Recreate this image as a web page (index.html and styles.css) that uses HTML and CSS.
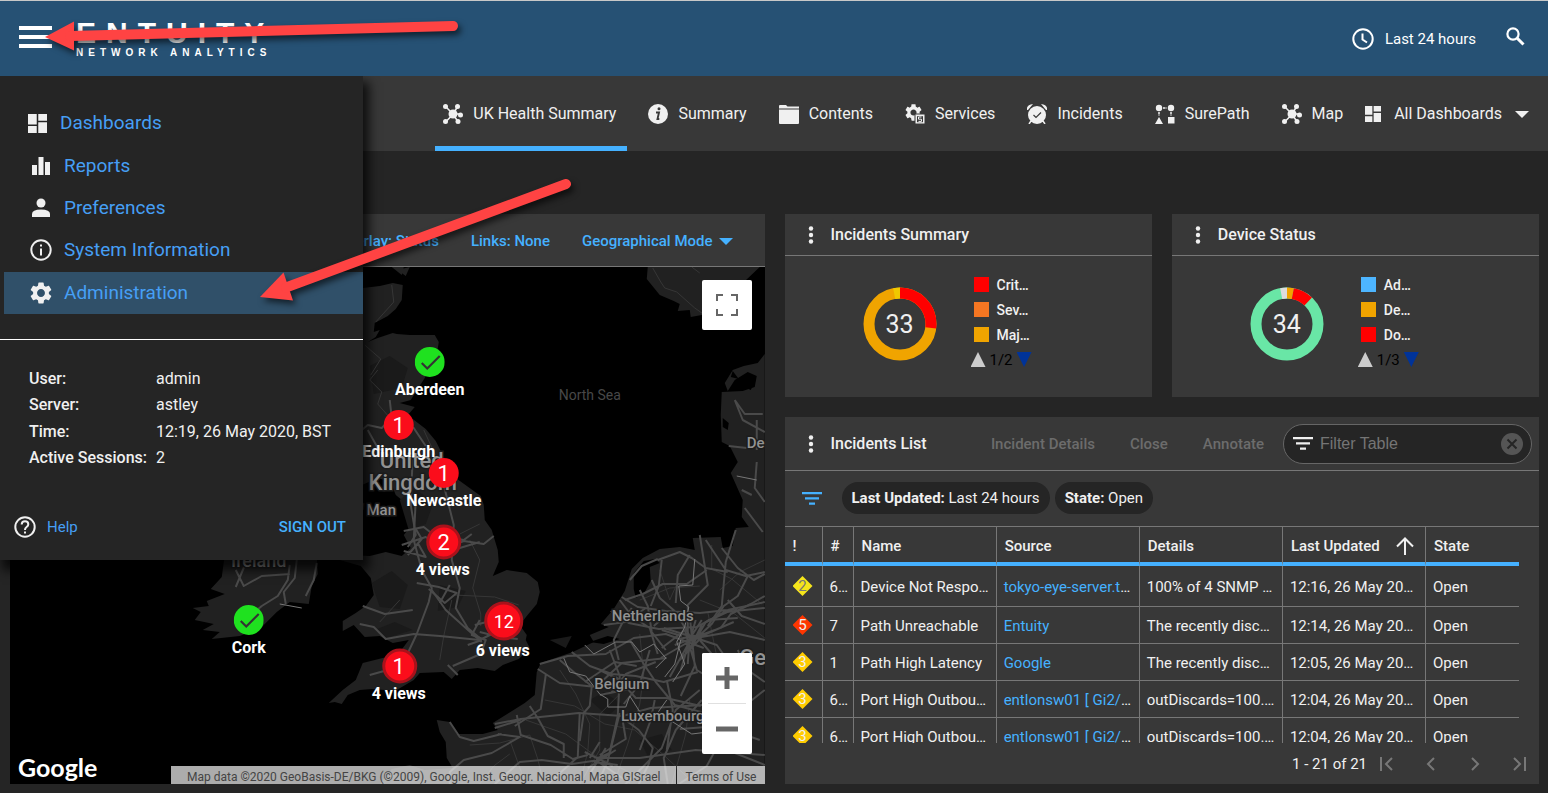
FILE: index.html
```html
<!DOCTYPE html>
<html lang="en">

<head>
  <meta charset="UTF-8" />
  <meta name="viewport" content="width=device-width, initial-scale=1.0" />
  <title>Entuity Network Analytics</title>
  <link rel="stylesheet" href="styles.css">
</head>

<body>
  <!-- shared icons -->
  <svg class="sprite" aria-hidden="true">
    <symbol id="dash" viewBox="0 0 20 20"><path d="M0 0h9.200v11H0zM10.800 0H20v7h-9.200zM0 12.700h9.200V20H0zM10.800 8.800H20V20h-9.200z" /></symbol>
    <symbol id="hub" viewBox="0 0 20 20">
      <path d="M3 3l7 7 5-8M3 17.500l7-7 5 7M10 10h8" stroke="currentColor" stroke-width="1.500" fill="none" />
      <circle cx="10" cy="10" r="4.500" /><circle cx="2.500" cy="2.500" r="2.500" /><circle cx="14.500" cy="2.500" r="2.500" />
      <circle cx="17.500" cy="11" r="2.500" /><circle cx="2.500" cy="17.500" r="2.500" /><circle cx="15" cy="17.500" r="2.500" />
    </symbol>
    <symbol id="gear" viewBox="2 2 20 20"><path d="M19.140 12.940c.04-.3.06-.61.06-.94 0-.32-.02-.64-.07-.94l2.030-1.580c.18-.14.23-.41.12-.61l-1.920-3.320c-.12-.22-.37-.29-.59-.22l-2.390.96c-.5-.38-1.030-.7-1.620-.94l-.36-2.540c-.04-.24-.24-.41-.48-.41h-3.840c-.24 0-.43.17-.47.41l-.36 2.540c-.59.24-1.130.57-1.620.94l-2.390-.96c-.22-.08-.47 0-.59.22L2.740 8.870c-.12.21-.08.47.12.61l2.030 1.580c-.05.3-.09.63-.09.94s.02.64.07.94l-2.030 1.580c-.18.14-.23.41-.12.61l1.920 3.320c.12.22.37.29.59.22l2.390-.96c.5.38 1.030.7 1.620.94l.36 2.540c.05.24.24.41.48.41h3.840c.24 0 .44-.17.47-.41l.36-2.540c.59-.24 1.130-.56 1.620-.94l2.390.96c.22.08.47 0 .59-.22l1.920-3.320c.12-.22.07-.47-.12-.61l-2.010-1.580zM12 15.600c-1.980 0-3.600-1.620-3.600-3.600s1.620-3.600 3.600-3.600 3.600 1.620 3.600 3.600-1.620 3.600-3.600 3.600z" /></symbol>
    <symbol id="filter" viewBox="0 0 20 13"><path d="M0 0h20v2.300H0zM3 5.200h14v2.300H3zM7 10.400h6v2.300H7z" /></symbol>
    <symbol id="dots" viewBox="0 0 6 18"><circle cx="3" cy="2.500" r="2.200" /><circle cx="3" cy="9" r="2.200" /><circle cx="3" cy="15.500" r="2.200" /></symbol>
    <symbol id="caret" viewBox="0 0 14 7"><path d="M0 0h14L7 7z" /></symbol>
    <symbol id="tick" viewBox="-15 -15 30 30"><circle r="15" fill="#1fe11f" /><path d="M-8 1l5.500 5.500L10-6" fill="none" stroke="#333" stroke-width="2.200" /></symbol>
  </svg>

  <header class="topbar">
    <button class="burger" aria-label="Menu"><span></span><span></span><span></span></button>
    <div class="logo">
      <span class="logo-name">ENTUITY</span>
      <span class="logo-sub">NETWORK ANALYTICS</span>
    </div>
    <button class="period">
      <svg width="22" height="22" viewBox="0 0 22 22" fill="none" stroke="currentColor" stroke-width="2"><circle cx="11" cy="11" r="9.700" /><path d="M10.500 5.500v6l4.500 3" /></svg>
      Last 24 hours
    </button>
    <button class="search" aria-label="Search">
      <svg width="19" height="19" viewBox="0 0 19 19" fill="none" stroke="currentColor"><circle cx="7" cy="7" r="5.600" stroke-width="2.200" /><path d="M11 11l6.500 6.500" stroke-width="3" /></svg>
    </button>
  </header>

  <nav class="tabs">
    <a href="#" class="tab active"><svg class="icon"><use href="#hub" /></svg>UK Health Summary</a>
    <a href="#" class="tab">
      <svg class="icon" viewBox="0 0 20 20"><circle cx="10" cy="10" r="10" /><circle cx="11" cy="4.800" r="1.500" fill="#383838" /><path d="M8 8.500h3l-1.500 6.500h1.800" fill="none" stroke="#383838" stroke-width="1.900" /></svg>Summary</a>
    <a href="#" class="tab">
      <svg class="icon" viewBox="0 0 20 20"><path d="M1 1h6l1.500 1.500H20v2H0V2q0-1 1-1zM0 5.500h20V19q0 1-1 1H1q-1 0-1-1z" /></svg>Contents</a>
    <a href="#" class="tab">
      <svg class="icon" viewBox="0 0 20 20"><use href="#gear" width="17" height="17" /><path d="M10 10h10v10H10z" stroke="#383838" /><path d="M12 12.200h6v6h-6z" fill="#383838" /><path d="M16.500 13h-3v2.200h3v2.200h-3" fill="none" stroke="currentColor" /></svg>Services</a>
    <a href="#" class="tab">
      <svg class="icon" viewBox="0 0 20 20"><circle cx="10" cy="11" r="9" /><path d="M0 6q-1-5 6-6L1 6zM20 6q1-5-6-6l5 6z" /><path d="M4 17l-2 3M16 17l2 3" stroke="currentColor" stroke-width="1.500" /><path d="M6.500 11l2.500 2.500L14 8.500" fill="none" stroke="#383838" stroke-width="1.200" /></svg>Incidents</a>
    <a href="#" class="tab">
      <svg class="icon" viewBox="0 0 20 20"><circle cx="4" cy="4" r="3.200" /><circle cx="16" cy="4" r="3.200" /><path d="M4 13l4 7H0zM13 13h6.500v6.500H13z" /><path d="M8 4h4M4 8v4M16 8v4" stroke="currentColor" stroke-width="1.500" stroke-dasharray="2.500 1" /></svg>SurePath</a>
    <a href="#" class="tab"><svg class="icon"><use href="#hub" /></svg>Map</a>
    <a href="#" class="tab tab-all"><svg class="icon-sm"><use href="#dash" /></svg>All Dashboards<svg class="caret"><use href="#caret" /></svg></a>
  </nav>

  <main class="dashboard">
    <section class="panel map-panel">
      <div class="map-head">
        <a href="#">Overlay: Status</a>
        <a href="#">Links: None</a>
        <a href="#">Geographical Mode<svg class="caret"><use href="#caret" /></svg></a>
      </div>
      <div class="map">
        <!-- geography first, then roads, borders, names and pins -->
        <svg class="map-canvas" viewBox="10 267 755 517" preserveAspectRatio="xMidYMid slice">
          <g fill="#212121">
            <path d="M340 292L363 288 380 286 393 283 403 285 402 300 396 309 388 316 375 323 374 332 380 330 376 337 368 342 378 338 393 333 397 334 410 335 435 335 439 342 437 355 432 364 425 378 416 392 411 400 400 403 415 407 409 414 394 413 392 418 413 419 426 429 436 441 443 455 456 478 481 496 484 505 485 520 492 530 498 550 499 562 493 576 507 570 527 573 538 582 540 592 537 604 527 616 520 625 527 635 526 640 530 648 519 659 503 665 495 671 478 668 460 670 452 679 444 672 420 673 414 680 397 690 385 690 372 689 360 690 348 695 342 704 335 702 329 703 343 690 356 680 363 663 383 658 398 655 409 640 393 643 380 636 365 637 354 625 343 631 343 621 356 613 366 606 374 595 371 578 361 566 340 560 350 555 370 556 386 552 402 556 411 548 404 535 413 524 412 508 396 495 391 482 378 478 360 486 340 478z" />
            <path d="M392 267h12l-2 8zM398 270l12-3-4 9z" />
            <path d="M225 555L317 555 318 574 312 586 309 604 290 602 277 612 262 627 240 636 212 639 220 632 203 630 214 624 195 620 201 612 193 608 209 606 207 601 225 594 211 589 222 577z" />
            <path d="M648 267L647 279 660 295 674 301 680 304 678 311 690 310 691 317 702 315 724 301 741 285 760 267z" />
            <path d="M765 354L758 363 744 366 733 370 725 383 728 391 735 380 748 372 757 376 755 387 743 391 722 392 721 415 722 442 730 446 738 462 731 473 743 500 742 517 749 527 736 528 733 546 723 548 721 537 693 538 695 550 680 547 660 549 643 558 632 569 625 591 614 609 601 624 609 627 590 635 594 642 573 652 541 663 537 672 535 695 525 703 493 723 498 730 483 734 457 734 450 722 437 720 440 732 446 742 447 758 453 768 425 770 410 765 392 769 380 784 765 784z" />
          </g>
          <path fill="#000" d="M634 589V573L644 561 655 559 660 563 650 567 651 581 644 594 636 598zM746 374l10 6-5 10-9-4zM723 418l6 5-1 7-5-3zM590 642l18-6 12 3-16 5zM733 371l6 8-8-2z" />
          <g fill="#1a1a1a"><path d="M370 366l20-10 18 12-6 20-28 6zM400 500l14-12 20 14-8 22-17 6zM372 583l20-12 16 14-8 24-20-2zM375 630l20-8 18 8-26 8zM440 585l26 6-8 16-20 4zM590 700l14-8 18 12-14 12zM640 740l22-6 10 16-24 6zM550 640l22-4-6 12z" /></g>

          <g class="lanes">
            <path d="M378 370l-8 10 12 12-4 12 14 16 10 14M365 345l16 14-10 16M470 540l10 20-7 28 8 26 0 12M455 595l40 2 24 8M452 600l-8 36-4 24M424 430l12 26 8 10M480 524l-20 10M400 600l-20 22" />
            <path d="M653 268l8 14 4 6 12 4 18 16 10 7M392 285l2 17-18 20M700 273l-8-6" />
            <path d="M660 570l10 30 8-18M640 600l30-12 30-2M700 600l35 14 30 24M712 545v24l20 10 30 25M720 670l-6-28-6-30M640 634l4 40-4 30-12 40-14 40M526 720l40 14 30 22 50 24M470 745l30-2 30-8 8 24 6 25M580 784l20-34 0-36 28-28M545 700l30 6 30 18 30 6 30 26 30 28M690 700l-4 34-14 50M560 670l16 24 14 30-2 28-8 32M720 590l20-18 25-12M510 740l16 44M480 784l14-18 16-12" />
          </g>
          <g class="roads">
            <path d="M392 418L382 428 368 425 350 440M392 418l-2-18M392 418l22 10 12 18M368 430l10 18 18 12M413 455l-2 50 5 30-8 12" />
            <path d="M444 485l10 40-2 35 8 28-4 20 12 20 12 10M416 500l-2 40 8 30 10 18-3 14-12 32-14 30-6 15M432 590l14 20 20 18 16 14" />
            <path d="M404 531l20-4 10 8 30 5 8-6M402 545l24-8 18 12 20-8 20 3 10-8M408 555l14-16-6-10M418 543l8 14-22-6M460 548l20-6" />
            <path d="M360 624l14 3 12 12 28-5 26 2 40 4 16-8M417 583l22 4 18 6-12 10-16-14M440 603l10-18" />
            <path d="M480 620l-8 15 14 5-5 14-28 12M480 632l20 5 18 2M475 625l20-5M448 665l10 10M482 640l-14 5M370 675l25-7M363 606l22 8 28-4" />
            <path d="M246 563l-10 24M236 570l8 16 18-10 28-2M290 565l-2 15-10 16-16 10M297 560l-2 18-11 14 2 12M317 563l-3 17-8 16M262 606l-14 12" />
            <path d="M735 400l10 14 18 0M735 400l8 20 22 12M757 420v30M729 446l18 2M757 462l-2 26 10 14M745 508l18 24M742 490l10 5" />
            <path d="M630 580l12-14 16-7M658 560l22-8 12 6 14 10 22 4M625 600l18-6 20-10 24 0 20-14M662 560l-3 26-8 20M690 555l-12 20-2 28M706 540l20 30 20 6 19-4M736 530l-10 32-4 44-14 20M722 548l16 20 16 12 11-6" />
            <path d="M622 597l16 10 28 4 34 2 28-3 37-8M611 611l18 12 30 6 38-2 28-15 40-4M604 625l22-3 20-14M620 600l12 16 18 12 8 26M632 608l-10 16-8 16 5 20M640 590l8 16 4 26 14 18M652 580l8 18 16 14 14 24-2 28" />
            <path d="M700 535l8 50-20 20 0 40-18 32M748 576l-10 20-14 10-12 18-13 12-38 22M765 640l-35-8-34 6-32-10M690 650l16-28 30-14M680 660l24-25 30-13M685 630l12 40 40 25M686 645l16-25M687 635l30 10 20 28M675 645l40-15M690 616l5 50-14 30M696 620l-15 50M704 634l-25 5M702 625l-14 28" />
            <path d="M765 596l-14 8-20 10-10 14M738 650l10 20 17 12M728 600l14 16 23 8M690 612l-22 2-14 12M682 636l-20-6M700 640l12 14 20 6M688 628l-26 20M708 620l30-2" />
            <path d="M540 664l28-8 38-2 28-16 32-4 38 14M538 669l22 14 36 4 26-24 45-5M560 660l14 12 18 14-2 20-6 7-4 28M572 652l18 14 22 8 24 2 28 6 34-10M610 650l10 26-2 40-10 45-8 18M546 675l-5 34-26 17" />
            <path d="M600 670l20 10 16 18 30 0 35 8M612 692l14-18 30-12M616 677l14 12-30 6M600 685l40 2M585 682l30-20 22 4M650 650l-10 34-16 20M630 640l14 24 12 18 19 23 30 8" />
            <path d="M495 724l26-5 58-6 44 3 28-8 52-3M495 728l26-8M517 715l4 20 30 10 22 14 15-4M530 706l8 12 10 18 16 8 0 14M498 734l22 3-28 16-28 7-14 12v12M450 722l10 15 14 4 28-7" />
            <path d="M580 713l-2 44-30 27M620 713l-10 40-14 6M600 760l-28 4-30-4-22 2-25 22M600 755l16-10 10-6-4-24M600 758l40 0 56-8 69 5M600 763l30 20M585 752l28 14M588 768l28-18M590 758l10-16M594 762l24 3M606 748l-16 26" />
            <path d="M623 718l16 12 14 18-4 16-10 20M700 690l-24 20-14 38-20 20-18 18M667 680l6 30-6 40M702 700l-26 30-12 28 4 26M765 690l-38 30-8 24-12 22-28 18M655 700l-4 20-11 30M760 740l-40-14-40 3M765 765l-35-14" />
          </g>
          <path class="border" d="M695 559l-2 26-14 1 2 15 8 6-4 20-8 15 8 22-12 18M585 645l9 9 22-12 16 0 8 10 14-8 12 14-10 10M564 658l6 14 16 4 14 18 8 5v8l18 0 4-11 14 22 26 2 22 14 16-2M667 700l-10 14M681 640l-6 24-10 13M737 476l20 4M280 604l22 4" />

          <g class="places">
            <text x="412" y="468" class="country">United</text>
            <text x="413" y="490" class="country">Kingdom</text>
            <text x="377" y="515">f Man</text>
            <text x="259" y="567" class="region">Ireland</text>
            <text x="653" y="621">Netherlands</text>
            <text x="622" y="689">Belgium</text>
            <text x="663" y="721">Luxembourg</text>
            <text x="753" y="665" class="country">Ge</text>
            <text x="756" y="448">De</text>
            <text x="590" y="400" class="sea">North Sea</text>
          </g>

          <g class="pins">
            <use href="#tick" x="415" y="347" width="30" height="30" /><text x="430" y="395">Aberdeen</text>
            <use href="#tick" x="234" y="605" width="30" height="30" /><text x="249" y="653">Cork</text>
            <circle cx="399" cy="425" r="15" /><text x="399" y="433" class="count">1</text><text x="399" y="457">Edinburgh</text>
            <circle cx="444" cy="473" r="15" /><text x="444" y="481" class="count">1</text><text x="444" y="506">Newcastle</text>
            <circle cx="444" cy="542" r="16" class="ring" /><text x="444" y="550" class="count">2</text><text x="443" y="575">4 views</text>
            <circle cx="504" cy="621" r="18" class="ring" /><text x="504" y="628" class="count count-sm">12</text><text x="503" y="656">6 views</text>
            <circle cx="400" cy="666" r="16" class="ring" /><text x="399" y="674" class="count">1</text><text x="399" y="699">4 views</text>
          </g>
        </svg>

        <button class="map-btn full" aria-label="Toggle fullscreen">
          <svg width="22" height="22" viewBox="0 0 22 22" fill="none" stroke="#666" stroke-width="2"><path d="M7 1H1V7M15 1h6V7M7 21H1V15M15 21h6V15" /></svg>
        </button>
        <div class="zoom">
          <button class="map-btn" aria-label="Zoom in"><svg width="22" height="22" viewBox="0 0 22 22"><path d="M0 8.500h8.500V0h5v8.500H22v5h-8.500V22h-5v-8.500H0z" fill="#666" /></svg></button>
          <button class="map-btn" aria-label="Zoom out"><svg width="22" height="22" viewBox="0 0 22 22"><path d="M0 8.500h22v5H0z" fill="#666" /></svg></button>
        </div>
        <span class="google">Google</span>
        <div class="credits">
          <span>Map data ©2020 GeoBasis-DE/BKG (©2009), Google, Inst. Geogr. Nacional, Mapa GISrael</span>
          <a href="#">Terms of Use</a>
        </div>
      </div>
    </section>

    <div class="side">
      <div class="cards">
        <section class="panel">
          <div class="card-head"><svg class="dots"><use href="#dots" /></svg><h2>Incidents Summary</h2></div>
          <div class="card-body">
            <div class="donut">
              <svg viewBox="0 0 74 74">
                <circle pathLength="100" stroke="#f0a400" />
                <circle pathLength="100" stroke="#ff0000" stroke-dasharray="27 73" />
                <circle pathLength="100" stroke="#f0c800" stroke-dasharray="3 97" stroke-dashoffset="-97" />
              </svg>
              <span>33</span>
            </div>
            <div class="legend">
              <ul>
                <li><i class="red"></i>Crit…</li>
                <li><i class="orange"></i>Sev…</li>
                <li><i class="amber"></i>Maj…</li>
              </ul>
              <div class="pager"><i class="up"></i>1/2<i class="down"></i></div>
            </div>
          </div>
        </section>
        <section class="panel">
          <div class="card-head"><svg class="dots"><use href="#dots" /></svg><h2>Device Status</h2></div>
          <div class="card-body">
            <div class="donut">
              <svg viewBox="0 0 74 74">
                <circle pathLength="100" stroke="#69e6a6" />
                <circle pathLength="100" stroke="#f0a400" stroke-dasharray="3 97" />
                <circle pathLength="100" stroke="#ff0000" stroke-dasharray="9 91" stroke-dashoffset="-3" />
                <circle pathLength="100" stroke="#dddddd" stroke-dasharray="3 97" stroke-dashoffset="-97" />
              </svg>
              <span>34</span>
            </div>
            <div class="legend">
              <ul>
                <li><i class="blue"></i>Ad…</li>
                <li><i class="amber"></i>De…</li>
                <li><i class="red"></i>Do…</li>
              </ul>
              <div class="pager"><i class="up"></i>1/3<i class="down"></i></div>
            </div>
          </div>
        </section>
      </div>

      <section class="panel list">
        <div class="list-head">
          <svg class="dots"><use href="#dots" /></svg>
          <h2>Incidents List</h2>
          <div class="actions">
            <button disabled>Incident Details</button>
            <button disabled>Close</button>
            <button disabled>Annotate</button>
          </div>
          <label class="filter">
            <svg class="filter-icon"><use href="#filter" /></svg>
            <input type="text" placeholder="Filter Table" aria-label="Filter Table" />
            <svg width="22" height="22" viewBox="0 0 22 22"><circle cx="11" cy="11" r="11" fill="#555" /><path d="M6.500 6.500l9 9M15.500 6.500l-9 9" stroke="#252525" stroke-width="2" /></svg>
          </label>
        </div>
        <div class="chips">
          <svg class="filter-icon"><use href="#filter" /></svg>
          <span class="chip"><b>Last Updated:</b> Last 24 hours</span>
          <span class="chip"><b>State:</b> Open</span>
        </div>
        <div class="table-wrap">
          <table>
            <thead>
              <tr>
                <th class="c-sev">!</th>
                <th class="c-num">#</th>
                <th>Name</th>
                <th>Source</th>
                <th>Details</th>
                <th><span class="sorted">Last Updated<svg width="18" height="18" viewBox="0 0 18 18" fill="none" stroke="currentColor" stroke-width="2"><path d="M9 18V2M1 9.500L9 1.500l8 8" /></svg></span></th>
                <th class="c-state">State</th>
              </tr>
            </thead>
            <tbody>
              <tr>
                <td><span class="sev minor">2</span></td>
                <td>6…</td>
                <td>Device Not Respo…</td>
                <td><a href="#">tokyo-eye-server.t</a>…</td>
                <td>100% of 4 SNMP …</td>
                <td>12:16, 26 May 20…</td>
                <td>Open</td>
              </tr>
              <tr>
                <td><span class="sev critical">5</span></td>
                <td>7</td>
                <td>Path Unreachable</td>
                <td><a href="#">Entuity</a></td>
                <td>The recently disc…</td>
                <td>12:14, 26 May 20…</td>
                <td>Open</td>
              </tr>
              <tr>
                <td><span class="sev major">3</span></td>
                <td>1</td>
                <td>Path High Latency</td>
                <td><a href="#">Google</a></td>
                <td>The recently disc…</td>
                <td>12:05, 26 May 20…</td>
                <td>Open</td>
              </tr>
              <tr>
                <td><span class="sev major">3</span></td>
                <td>6…</td>
                <td>Port High Outbou…</td>
                <td><a href="#">entlonsw01 [ Gi2/</a>…</td>
                <td>outDiscards=100.…</td>
                <td>12:04, 26 May 20…</td>
                <td>Open</td>
              </tr>
              <tr>
                <td><span class="sev major">3</span></td>
                <td>6…</td>
                <td>Port High Outbou…</td>
                <td><a href="#">entlonsw01 [ Gi2/</a>…</td>
                <td>outDiscards=100.…</td>
                <td>12:04, 26 May 20…</td>
                <td>Open</td>
              </tr>
            </tbody>
          </table>
        </div>
        <div class="paging">
          <span>1 - 21 of 21</span>
          <button disabled aria-label="First page"><svg viewBox="0 0 16 16"><path d="M2 1v14M13 2L7 8l6 6" /></svg></button>
          <button disabled aria-label="Previous page"><svg viewBox="0 0 16 16"><path d="M11 2L5 8l6 6" /></svg></button>
          <button disabled aria-label="Next page"><svg viewBox="0 0 16 16"><path d="M5 2l6 6-6 6" /></svg></button>
          <button disabled aria-label="Last page"><svg viewBox="0 0 16 16"><path d="M3 2l6 6-6 6M14 1v14" /></svg></button>
        </div>
      </section>
    </div>
  </main>

  <!-- slide out main menu -->
  <aside class="menu">
    <ul class="menu-list">
      <li class="first"><a href="#"><svg><use href="#dash" /></svg>Dashboards</a></li>
      <li><a href="#"><svg viewBox="0 0 22 22"><path d="M2 10h5v10H2zM8.500 2h5v18h-5zM15 7h5v13h-5z" /></svg>Reports</a></li>
      <li><a href="#"><svg viewBox="0 0 22 22"><circle cx="11" cy="6" r="4.500" /><path d="M2 20v-3q0-4.500 9-4.500t9 4.500v3z" /></svg>Preferences</a></li>
      <li><a href="#"><svg viewBox="0 0 22 22"><circle cx="11" cy="11" r="9.700" fill="none" stroke="currentColor" stroke-width="2" /><path d="M10 5.500h2v2h-2zM10 9.500h2v7h-2z" /></svg>System Information</a></li>
      <li class="selected"><a href="#"><svg><use href="#gear" /></svg>Administration</a></li>
    </ul>
    <dl class="session">
      <dt>User:</dt><dd>admin</dd>
      <dt>Server:</dt><dd>astley</dd>
      <dt>Time:</dt><dd>12:19, 26 May 2020, BST</dd>
      <dt>Active Sessions:</dt><dd>2</dd>
    </dl>
    <div class="menu-foot">
      <a href="#"><svg width="22" height="22" viewBox="0 0 22 22" fill="none" stroke="#f0f0f0" stroke-width="2"><circle cx="11" cy="11" r="9.700" /><path d="M7.700 8.500q0-3.300 3.300-3.300t3.300 3q0 1.600-1.700 2.800T11 14M11 15.500v2" /></svg>Help</a>
      <button>SIGN OUT</button>
    </div>
  </aside>

  <!-- red pointers over the page -->
  <svg class="pointers" width="600" height="320" viewBox="0 0 600 320" aria-hidden="true">
    <g fill="#ff4343" stroke="none">
      <g class="pointer"><path d="M45 37l29-15.500v29z" /><path d="M70 36L453 26" stroke="#ff4343" stroke-width="10" stroke-linecap="round" /></g>
      <g class="pointer"><path d="M260 297l23.500-24.500 9.500 28z" /><path d="M286 287.500L566 184" stroke="#ff4343" stroke-width="10" stroke-linecap="round" /></g>
    </g>
  </svg>
</body>

</html>
```
FILE: styles.css
```css
* {
  margin: 0;
  padding: 0;
  box-sizing: border-box;
}

body {
  position: relative;
  display: flex;
  flex-direction: column;
  height: 100vh;
  background: #252525;
  color: #f0f0f0;
  font: 16px/20px Roboto, "Liberation Sans", sans-serif;
}

ul {
  list-style: none;
}

a {
  color: #45b1ff;
  text-decoration: none;
}

button {
  background: none;
  border: none;
  color: inherit;
  font: inherit;
  cursor: pointer;
}

svg {
  fill: currentColor;
  flex: none;
}

h2 {
  font-size: 16px;
  font-weight: 500;
}

.sprite {
  position: absolute;
  width: 0;
  height: 0;
}

/* top bar */
.topbar {
  display: flex;
  align-items: center;
  flex: none;
  height: 76px;
  padding: 0 23px 0 19px;
  background: #265174;
  border-top: 1px solid #c8c8c8;
  color: #fff;
}

.burger {
  display: flex;
  flex-direction: column;
  gap: 5px;
  width: 33px;
  margin-bottom: 4px;
}

.burger span {
  height: 4px;
  background: #fff;
}

.logo {
  display: flex;
  flex-direction: column;
  flex: 1;
  padding-left: 24px;
  font-family: "Liberation Sans", Arial, sans-serif;
  font-weight: bold;
}

.logo-name {
  font-size: 30px;
  line-height: 28px;
  letter-spacing: 10px;
}

.logo-sub {
  font-size: 10px;
  line-height: 12px;
  letter-spacing: 5px;
}

.period {
  display: flex;
  align-items: center;
  gap: 11px;
  font-size: 15px;
}

.period svg,
.search svg {
  fill: none;
  display: block;
}

.search {
  padding: 0 0 4px 30px;
}

/* dashboard tabs */
.tabs {
  display: flex;
  justify-content: flex-end;
  flex: none;
  gap: 13px;
  height: 75px;
  padding-right: 19px;
  background: #383838;
}

.tab {
  display: flex;
  align-items: center;
  gap: 10px;
  padding: 6px 11px 0 8px;
  border-bottom: 5px solid transparent;
  color: #f0f0f0;
  white-space: nowrap;
}

.tab.active {
  border-color: #45b1ff;
}

.tab-all {
  gap: 13px;
  padding: 6px 0 0;
  margin-left: -2px;
}

.icon {
  width: 20px;
  height: 20px;
}

.icon-sm {
  width: 16px;
  height: 16px;
}

.caret {
  width: 14px;
  height: 7px;
}

/* panels */
.dashboard {
  display: grid;
  grid-template-columns: minmax(0, 1fr) minmax(0, 1fr);
  gap: 20px;
  flex: 1;
  min-height: 0;
  padding: 63px 9px 9px 10px;
}

.panel {
  display: flex;
  flex-direction: column;
  min-width: 0;
  background: #383838;
}

.map-panel {
  min-height: 0;
}

.map-head {
  display: flex;
  align-items: center;
  justify-content: flex-end;
  gap: 32px;
  height: 53px;
  padding: 2px 32px 0 0;
  border-bottom: 1px solid #777;
  font-size: 15px;
  font-weight: 500;
}

.map-head a {
  display: flex;
  align-items: center;
  gap: 6px;
}

.map {
  position: relative;
  flex: 1;
  min-height: 0;
  background: #000;
  overflow: hidden;
}

.map-canvas {
  display: block;
  width: 100%;
  height: 100%;
}

.roads,
.lanes,
.border {
  fill: none;
  stroke: #4a4a4a;
  stroke-width: 2;
  stroke-linejoin: round;
}

.lanes {
  stroke: #363636;
  stroke-width: 1;
}

.border {
  stroke: #777;
  stroke-width: 1;
}

.places text {
  fill: #929292;
  stroke: #1c1c1c;
  stroke-width: 3;
  paint-order: stroke;
  font-size: 15px;
  font-weight: 500;
  text-anchor: middle;
}

.places .country {
  font-size: 22px;
}

.places .region {
  font-size: 18px;
}

.places .sea {
  fill: #484848;
  stroke: none;
  font-size: 14px;
  font-weight: 400;
}

.pins circle {
  fill: #fb0d1b;
}

.pins .ring {
  stroke: #a9121b;
  stroke-width: 3;
}

.pins text {
  fill: #fff;
  font-weight: 700;
  text-anchor: middle;
}

.pins .count {
  font-size: 22px;
  font-weight: 400;
}

.pins .count-sm {
  font-size: 18px;
}

.map-btn {
  display: flex;
  align-items: center;
  justify-content: center;
  width: 50px;
  height: 50px;
  background: #fff;
  border-radius: 2px;
}

.map-btn svg {
  display: block;
}

.full {
  position: absolute;
  top: 13px;
  right: 13px;
}

.full svg {
  fill: none;
}

.zoom {
  position: absolute;
  right: 13px;
  bottom: 30px;
  background: #fff;
  border-radius: 2px;
}

.zoom .map-btn + .map-btn {
  height: 51px;
  background: linear-gradient(#e0e0e0, #e0e0e0) center top / 38px 1px no-repeat;
}

.google {
  position: absolute;
  left: 8px;
  bottom: 2px;
  color: #fff;
  font: bold 25px/30px Lato, sans-serif;
}

.credits {
  position: absolute;
  right: 0;
  bottom: 0;
  display: flex;
  gap: 1px;
  font-size: 12px;
  line-height: 18px;
  white-space: nowrap;
}

.credits > * {
  height: 18px;
  padding: 2px 8px 0;
  background: rgba(245, 245, 245, 0.7);
  color: #444;
}

.credits span {
  padding: 2px 16px 0;
}

/* right hand column */
.side {
  display: flex;
  flex-direction: column;
  gap: 20px;
  min-width: 0;
  min-height: 0;
}

.cards {
  display: grid;
  grid-template-columns: 1fr 1fr;
  gap: 20px;
}

.card-head,
.list-head {
  display: flex;
  align-items: center;
  height: 42px;
  padding-left: 23px;
  border-bottom: 1px solid #777;
}

.dots {
  width: 6px;
  height: 18px;
  margin-right: 17px;
}

.card-body {
  display: flex;
  gap: 37px;
  height: 141px;
  padding: 21px 0 0 78px;
}

.donut {
  display: grid;
  width: 74px;
  height: 74px;
  margin-top: 10px;
  place-items: center;
}

.donut > * {
  grid-area: 1 / 1;
}

.donut svg {
  width: 74px;
  height: 74px;
}

.donut circle {
  cx: 37px;
  cy: 37px;
  r: 31px;
  fill: none;
  stroke-width: 11;
  transform: rotate(-90deg);
  transform-origin: center;
}

.donut span {
  padding-top: 2px;
  font-size: 25px;
}

.legend {
  font-size: 14px;
  font-weight: 500;
}

.legend li {
  display: flex;
  align-items: center;
  gap: 8px;
  height: 15px;
  margin-bottom: 10px;
}

.legend li i {
  width: 15px;
  height: 15px;
}

.red { background: #ff0000; }
.orange { background: #f57622; }
.amber { background: #f0a400; }
.blue { background: #4db5ff; }

.pager {
  display: flex;
  align-items: center;
  gap: 4px;
  height: 15px;
  margin-left: -3px;
  color: #000;
  font-size: 15px;
  font-weight: 400;
}

.pager i {
  width: 15px;
  height: 15px;
}

.up {
  background: #ccc;
  clip-path: polygon(50% 0, 100% 100%, 0 100%);
}

.down {
  background: #039;
  clip-path: polygon(0 0, 100% 0, 50% 100%);
}

/* incidents list */
.list {
  flex: 1;
  min-height: 0;
  font-size: 15px;
}

.list-head {
  flex: none;
  height: 54px;
  padding-right: 7px;
}

.actions {
  display: flex;
  flex: 1;
  justify-content: flex-end;
  gap: 35px;
  padding-right: 19px;
  color: #6c6c6c;
  font-weight: 500;
}

.filter {
  display: flex;
  align-items: center;
  width: 249px;
  height: 40px;
  padding: 0 8px 0 9px;
  background: #252525;
  border: 1px solid #666;
  border-radius: 20px;
}

.filter-icon {
  width: 20px;
  height: 13px;
}

.filter input {
  flex: 1;
  min-width: 0;
  padding-left: 7px;
  background: none;
  border: none;
  outline: none;
  color: #f0f0f0;
  font: 16px "Liberation Sans", Arial, sans-serif;
}

.filter input::placeholder {
  color: #757575;
}

.chips {
  display: flex;
  align-items: center;
  flex: none;
  gap: 5px;
  height: 56px;
  padding: 0 0 1px 17px;
  border-bottom: 1px solid #777;
}

.chips .filter-icon {
  margin-right: 15px;
  color: #45b1ff;
}

.chip {
  height: 32px;
  padding: 0 10px;
  background: #252525;
  border-radius: 16px;
  line-height: 32px;
}

.table-wrap {
  flex: 1;
  min-height: 0;
  padding-right: 20px;
  overflow: hidden;
}

table {
  width: 100%;
  table-layout: fixed;
  border-collapse: separate;
  border-spacing: 0;
}

th,
td {
  height: 37px;
  padding: 2px 0 0 7px;
  border-right: 1px solid #777;
  border-bottom: 1px solid #777;
  overflow: hidden;
  text-align: left;
  white-space: nowrap;
}

th {
  height: 39px;
  padding-left: 8px;
  border-bottom: 4px solid #45b1ff;
  font-weight: 500;
}

th:last-child,
td:last-child {
  border-right: none;
}

tbody tr:first-child td {
  height: 41px;
}

.c-sev {
  width: 38px;
}

.c-num {
  width: 31px;
}

.c-state {
  width: 93px;
}

.sorted {
  display: flex;
  align-items: center;
  gap: 16px;
}

.sorted svg {
  fill: none;
}

.sev {
  display: block;
  width: 20px;
  height: 20px;
  margin: 0 0 2px 1px;
  clip-path: polygon(50% 0, 100% 50%, 50% 100%, 0 50%);
  text-align: center;
}

.minor {
  background: #f5e51b;
  color: #777;
}

.major {
  background: #fc0;
}

.critical {
  background: #ff3600;
}

.paging {
  display: flex;
  align-items: center;
  justify-content: flex-end;
  flex: none;
  height: 41px;
  padding-right: 12px;
}

.paging span {
  margin-right: 12px;
}

.paging button {
  width: 16px;
  height: 16px;
  margin-left: 28px;
  color: #777;
}

.paging span + button {
  margin-left: 0;
}

.paging svg {
  display: block;
  fill: none;
  stroke: currentColor;
  stroke-width: 2;
}

/* main menu */
.menu {
  position: absolute;
  top: 76px;
  left: 0;
  width: 363px;
  height: 484px;
  padding-top: 26px;
  background: #252525;
  box-shadow: 4px 8px 10px 2px rgba(0, 0, 0, 0.75);
  clip-path: inset(0 -30px -30px 0);
}

.menu-list {
  display: flex;
  flex-direction: column;
  height: 212px;
  padding-left: 4px;
  font-size: 19px;
}

.menu-list li {
  display: flex;
  flex: 1;
  padding-left: 26px;
}

.menu-list .first {
  padding-left: 24px;
}

.menu-list a {
  display: flex;
  align-items: center;
  gap: 12px;
  color: #469ff5;
}

.menu-list svg {
  width: 22px;
  height: 22px;
  color: #f0f0f0;
}

.menu-list .first svg {
  width: 19px;
  height: 19px;
}

.menu-list .first a {
  gap: 13px;
}

.menu-list .selected {
  background: #305069;
}

.session {
  display: grid;
  grid-template-columns: max-content 1fr;
  grid-auto-rows: 1fr;
  column-gap: 9px;
  align-items: center;
  height: 132px;
  margin-top: 25px;
  padding: 26px 0 0 29px;
  border-top: 1px solid #fff;
}

.session dt {
  font-weight: 500;
}

.menu-foot {
  display: flex;
  align-items: center;
  justify-content: space-between;
  margin-top: 45px;
  padding: 0 17px 0 14px;
  font-size: 15px;
}

.menu-foot a {
  display: flex;
  align-items: center;
  gap: 11px;
  color: #469ff5;
}

.menu-foot svg {
  fill: none;
}

.menu-foot button {
  color: #45b1ff;
  font-weight: 500;
}

.pointers {
  position: absolute;
  top: 0;
  left: 0;
  pointer-events: none;
}

.pointer {
  filter: drop-shadow(3px 4px 3px rgba(0, 0, 0, 0.6));
}
```
